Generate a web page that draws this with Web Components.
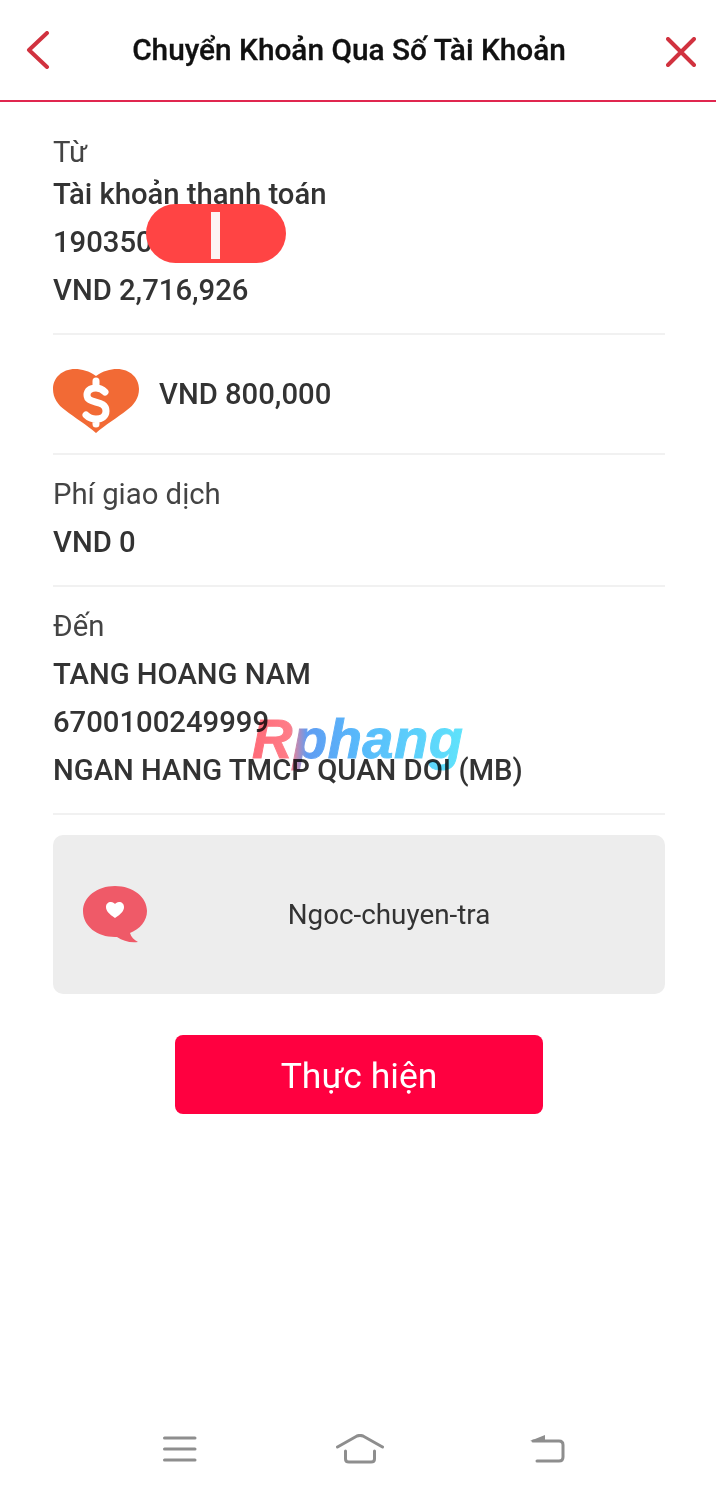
<!DOCTYPE html>
<html lang="vi">
<head>
<meta charset="utf-8">
<title>Chuyển Khoản Qua Số Tài Khoản</title>
<style>
  html, body { margin: 0; height: 1488px; background: #fff; overflow: hidden; }
  body { font-family: Roboto, "Liberation Sans", sans-serif; color: #333; }
</style>
</head>
<body>
<transfer-page>
  <app-bar slot="top">Chuyển Khoản Qua Số Tài Khoản</app-bar>

  <info-section label="Từ" first>
    <strong-line>Tài khoản thanh toán</strong-line>
    <strong-line>190350</strong-line>
    <strong-line>VND 2,716,926</strong-line>
    <redact-pill></redact-pill>
  </info-section>

  <amount-row>VND 800,000</amount-row>

  <info-section label="Phí giao dịch">
    <strong-line>VND 0</strong-line>
  </info-section>

  <info-section label="Đến">
    <strong-line>TANG HOANG NAM</strong-line>
    <strong-line>6700100249999</strong-line>
    <strong-line>NGAN HANG TMCP QUAN DOI (MB)</strong-line>
    <water-mark>Rphang</water-mark>
  </info-section>

  <memo-box>Ngoc-chuyen-tra</memo-box>
  <action-button>Thực hiện</action-button>

  <nav-bar slot="bottom"></nav-bar>
</transfer-page>

<script>
// Page frame: header on top, content column, system nav at the bottom
class TransferPage extends HTMLElement {
  constructor() {
    super();
    this.attachShadow({ mode: 'open' });
    this.shadowRoot.innerHTML = `
      <style>
        :host { display: flex; flex-direction: column; height: 1488px; }
        main { flex: 1; display: flex; flex-direction: column; padding: 0 51px 0 53px; }
      </style>
      <slot name="top"></slot>
      <main><slot></slot></main>
      <slot name="bottom"></slot>
    `;
  }
}
customElements.define('transfer-page', TransferPage);

class AppBar extends HTMLElement {
  constructor() {
    super();
    this.attachShadow({ mode: 'open' });
    this.shadowRoot.innerHTML = `
      <style>
        :host {
          display: flex;
          align-items: center;
          justify-content: space-between;
          height: 100px;
          padding: 0 20px 0 26px;
          border-bottom: 2px solid #e0264f;
        }
        svg { display: block; fill: none; stroke: #d1323f; stroke-width: 4; stroke-linecap: round; stroke-linejoin: round; }
        .title {
          flex: 1;
          text-align: center;
          font-size: 29.8px;
          font-weight: 500;
          color: #111;
          margin: -2px 18px 0 0;
          white-space: nowrap;
          -webkit-text-stroke: 0.3px #111;
        }
      </style>
      <svg width="24" height="38" viewBox="0 0 24 38"><path d="M21 2 L3 19 L21 36"/></svg>
      <div class="title"><slot></slot></div>
      <svg width="30" height="30" viewBox="0 0 30 30" style="margin-top:4px"><path d="M2 2 L28 28 M28 2 L2 28"/></svg>
    `;
  }
}
customElements.define('app-bar', AppBar);

// Block with a light label and bold lines, closed by a thin divider
class InfoSection extends HTMLElement {
  constructor() {
    super();
    this.attachShadow({ mode: 'open' });
    this.shadowRoot.innerHTML = `
      <style>
        :host {
          display: block;
          position: relative;
          padding: 15px 0 19px;
          border-bottom: 2px solid #f1f1f1;
        }
        :host([first]) { padding-top: 32px; }
        .label { font-size: 29.3px; line-height: 48px; color: #444; }
        :host([first]) .label { line-height: 36px; }
      </style>
      <div class="label"></div>
      <slot></slot>
    `;
  }

  connectedCallback() {
    this.shadowRoot.querySelector('.label').textContent = this.getAttribute('label') || '';
  }
}
customElements.define('info-section', InfoSection);

class StrongLine extends HTMLElement {
  constructor() {
    super();
    this.attachShadow({ mode: 'open' });
    this.shadowRoot.innerHTML = `
      <style>
        :host { display: block; font-size: 29.25px; line-height: 48px; font-weight: 500; color: #333; white-space: nowrap; }
      </style>
      <slot></slot>
    `;
  }
}
customElements.define('strong-line', StrongLine);

// Red scribble that hides the account number
class RedactPill extends HTMLElement {
  constructor() {
    super();
    this.attachShadow({ mode: 'open' });
    this.shadowRoot.innerHTML = `
      <style>
        :host {
          position: absolute;
          left: 93px;
          top: 102px;
          width: 140px;
          height: 59px;
          border-radius: 30px;
          background: #ff4444;
        }
        .bar { position: absolute; left: 65px; top: 8px; width: 9px; height: 47px; background: #fdf3f3; }
        /* end of the last digit, just visible past the pill */
        .peek { position: absolute; left: 131px; top: 44px; width: 8px; height: 10px; border-radius: 50%; background: #333; z-index: -1; }
      </style>
      <div class="peek"></div>
      <div class="bar"></div>
    `;
  }
}
customElements.define('redact-pill', RedactPill);

class WaterMark extends HTMLElement {
  constructor() {
    super();
    this.attachShadow({ mode: 'open' });
    this.shadowRoot.innerHTML = `
      <style>
        :host {
          position: absolute;
          left: 199px;
          top: 117px;
          mix-blend-mode: multiply;
          font-family: "Liberation Sans", sans-serif;
          font-size: 56px;
          line-height: 70px;
          font-weight: 700;
          font-style: italic;
          letter-spacing: 0.5px;
          -webkit-text-stroke: 1px transparent;
          background: linear-gradient(90deg, #ff6b78 0, #ff7d88 18%, #5f9cf2 26%, #58b9fb 50%, #5fe3fb 100%);
          -webkit-background-clip: text;
          background-clip: text;
          color: transparent;
        }
      </style>
      <slot></slot>
    `;
  }
}
customElements.define('water-mark', WaterMark);

class AmountRow extends HTMLElement {
  constructor() {
    super();
    this.attachShadow({ mode: 'open' });
    this.shadowRoot.innerHTML = `
      <style>
        :host {
          display: flex;
          align-items: center;
          gap: 20px;
          height: 118px;
          border-bottom: 2px solid #f1f1f1;
          font-size: 29.25px;
          font-weight: 500;
          color: #333;
        }
        svg { display: block; margin-top: 15px; }
      </style>
      <svg width="86" height="65" viewBox="0 0 86 65">
        <path fill="#f26a35" d="M43 7 C36 2 29 0 22 0 C9 0 0 9 0 20 C0 29 5 36 12 41 C22 49 34 56 43 64 C52 56 64 49 74 41 C81 36 86 29 86 20 C86 9 77 0 64 0 C57 0 50 2 43 7 Z"/>
        <path fill="none" stroke="#fff" stroke-width="7" stroke-linecap="round" d="M52 23 C49 20 46 19 43 19 C37 19 34 22 34 26 C34 36 53 30 53 42 C53 47 49 50 43 50 C38 50 35 48 33 46 M43 12 V17 M43 52 V55"/>
      </svg>
      <slot></slot>
    `;
  }
}
customElements.define('amount-row', AmountRow);

class MemoBox extends HTMLElement {
  constructor() {
    super();
    this.attachShadow({ mode: 'open' });
    this.shadowRoot.innerHTML = `
      <style>
        :host {
          display: flex;
          align-items: center;
          height: 159px;
          margin-top: 20px;
          padding: 0 30px;
          border-radius: 10px;
          background: #ededed;
          font-size: 27.8px;
          color: #333;
        }
        svg { display: block; flex: none; }
        .text { flex: 1; text-align: center; padding-right: 4px; }
      </style>
      <svg width="64" height="57" viewBox="0 0 64 57">
        <path fill="#ef5a68" d="M32 0 C50 0 64 11 64 25 C64 35 57 43 47 47 C48 51 51 54 55 56 C47 57 40 55 34 51 L32 51 C14 51 0 40 0 25 C0 11 14 0 32 0 Z"/>
        <path fill="#fff" d="M32 32 C26 28 23 25 23 21 C23 18 25 16 28 16 C30 16 31 17 32 18 C33 17 34 16 36 16 C39 16 41 18 41 21 C41 25 38 28 32 32 Z"/>
      </svg>
      <div class="text"><slot></slot></div>
    `;
  }
}
customElements.define('memo-box', MemoBox);

class ActionButton extends HTMLElement {
  constructor() {
    super();
    this.attachShadow({ mode: 'open' });
    this.shadowRoot.innerHTML = `
      <style>
        :host { display: block; margin: 41px 0 0 122px; }
        button {
          display: block;
          width: 368px;
          height: 79px;
          border: none;
          border-radius: 8px;
          background: #ff0040;
          color: #fff;
          font: 400 35.5px Roboto, sans-serif;
          padding: 3px 0 0;
        }
      </style>
      <button><slot></slot></button>
    `;
  }
}
customElements.define('action-button', ActionButton);

// Android system navigation
class NavBar extends HTMLElement {
  constructor() {
    super();
    this.attachShadow({ mode: 'open' });
    this.shadowRoot.innerHTML = `
      <style>
        :host {
          display: flex;
          align-items: center;
          height: 78px;
          padding: 0 0 0 163px;
          margin-bottom: 0;
        }
        svg { display: block; fill: none; stroke: #8e8e8e; stroke-width: 3; stroke-linecap: round; stroke-linejoin: round; }
      </style>
      <svg width="34" height="26" viewBox="0 0 34 26">
        <path d="M1.5 2 H32 M1.5 13 H32 M1.5 24 H32"/>
      </svg>
      <svg width="48" height="30" viewBox="0 0 48 30" style="margin:0 0 0 139px">
        <path d="M1.5 13 L21 2 Q24 .8 27 2 L46.5 13 M9.5 17 V25 Q9.5 28 13 28 H35 Q38.500 28 38.500 25 V17"/>
      </svg>
      <svg width="35" height="28" viewBox="0 0 35 28" style="margin:0 0 0 146px">
        <path d="M3 6 H29 Q33 6 33 10 V22 Q33 26 29 26 H7"/>
        <path fill="#8e8e8e" stroke="none" d="M0 6 L15 0 V7 Z"/>
      </svg>
    `;
  }
}
customElements.define('nav-bar', NavBar);
</script>
</body>
</html>
